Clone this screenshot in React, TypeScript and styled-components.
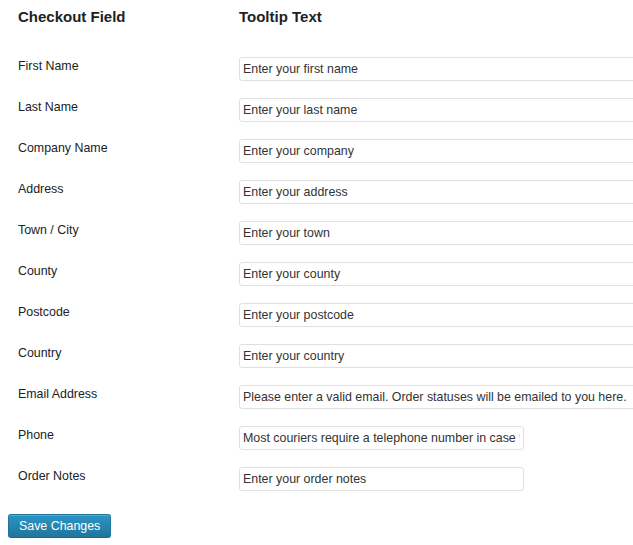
import React from 'react'
import styled, { createGlobalStyle } from 'styled-components'

const GlobalStyle = createGlobalStyle`
  html, body {
    margin: 0;
    padding: 0;
    background: #ffffff;
    overflow: hidden;
  }
  body {
    font-family: "Liberation Sans", Arial, sans-serif;
    color: #333333;
  }
`

const Page = styled.form`
  padding: 0 8px 8px 8px;
  width: 633px;
  box-sizing: border-box;
  overflow: hidden;
`

const FieldTable = styled.div`
  display: grid;
  grid-template-columns: 221px 1fr;
  padding-left: 10px;
`

const HeadCell = styled.div`
  font-size: 15px;
  font-weight: bold;
  color: #222222;
  height: 33px;
  padding-top: 8px;
  box-sizing: border-box;
  margin-bottom: 24px;
`

const Label = styled.div`
  font-size: 12.4px;
  color: #222222;
  height: 41px;
  padding-top: 1px;
  box-sizing: border-box;
  line-height: 16px;
`

const InputCell = styled.div`
  height: 41px;
  white-space: nowrap;
`

const TextInput = styled.input<{ $wide?: boolean }>`
  width: ${({ $wide }) => ($wide ? '420px' : '285px')};
  height: 24px;
  box-sizing: border-box;
  border: 1px solid #dfdfdf;
  border-radius: 3px;
  padding: 0 3px;
  margin: 0;
  font-family: "Liberation Sans", Arial, sans-serif;
  font-size: 12.4px;
  color: #333333;
  background: #ffffff;
  outline: none;
`

const SaveButton = styled.button`
  margin-top: 6px;
  height: 24px;
  padding: 0 10px;
  border: 1px solid #21759b;
  border-bottom-color: #1e6a8d;
  border-radius: 3px;
  background: linear-gradient(to bottom, #2a95c5, #21759b);
  box-shadow: inset 0 1px 0 rgba(120, 200, 230, 0.5);
  color: #ffffff;
  font-family: "Liberation Sans", Arial, sans-serif;
  font-size: 12.4px;
  line-height: 22px;
  cursor: pointer;
`

const fields: { label: string; tip: string; wide: boolean }[] = [
  { label: 'First Name', tip: 'Enter your first name', wide: true },
  { label: 'Last Name', tip: 'Enter your last name', wide: true },
  { label: 'Company Name', tip: 'Enter your company', wide: true },
  { label: 'Address', tip: 'Enter your address', wide: true },
  { label: 'Town / City', tip: 'Enter your town', wide: true },
  { label: 'County', tip: 'Enter your county', wide: true },
  { label: 'Postcode', tip: 'Enter your postcode', wide: true },
  { label: 'Country', tip: 'Enter your country', wide: true },
  {
    label: 'Email Address',
    tip: 'Please enter a valid email. Order statuses will be emailed to you here.',
    wide: true,
  },
  {
    label: 'Phone',
    tip: 'Most couriers require a telephone number in case there is a problem with delivery.',
    wide: false,
  },
  { label: 'Order Notes', tip: 'Enter your order notes', wide: false },
]

export default function App() {
  return (
    <Page onSubmit={(e) => e.preventDefault()}>
      <GlobalStyle />
      <FieldTable>
        <HeadCell>Checkout Field</HeadCell>
        <HeadCell>Tooltip Text</HeadCell>
        {fields.map((f) => (
          <React.Fragment key={f.label}>
            <Label>{f.label}</Label>
            <InputCell>
              <TextInput type="text" defaultValue={f.tip} $wide={f.wide} />
            </InputCell>
          </React.Fragment>
        ))}
      </FieldTable>
      <SaveButton type="submit">Save Changes</SaveButton>
    </Page>
  )
}
